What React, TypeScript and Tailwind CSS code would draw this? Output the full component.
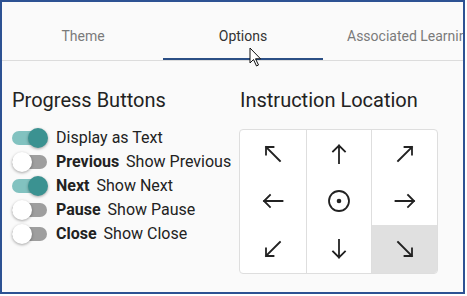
import React from 'react';

// arrow glyphs for the location picker, drawn on a 24 grid
const arrowPaths: Record<string, string> = {
  nw: 'M5 5 L19 19 M5 5 H12.5 M5 5 V12.5',
  n: 'M12 3.5 V21 M6 9.5 L12 3.5 L18 9.5',
  ne: 'M19 5 L5 19 M19 5 H11.5 M19 5 V12.5',
  w: 'M3 12 H21.5 M9 6 L3 12 L9 18',
  e: 'M21 12 H2.5 M15 6 L21 12 L15 18',
  sw: 'M5 19 L19 5 M5 19 H12.5 M5 19 V11.5',
  s: 'M12 20.5 V3 M6 14.5 L12 20.5 L18 14.5',
  se: 'M19 19 L5 5 M19 19 H11.5 M19 19 V11.5',
};

const Arrow: React.FC<{ dir: string }> = ({ dir }) => {
  if (dir === 'c') {
    return (
      <svg width="24" height="24" viewBox="0 0 24 24" fill="none">
        <circle cx="12" cy="12" r="10" stroke="#222" strokeWidth="1.8" />
        <circle cx="12" cy="12" r="2.3" fill="#222" />
      </svg>
    );
  }
  return (
    <svg width="24" height="24" viewBox="0 0 24 24" fill="none">
      <path d={arrowPaths[dir]} stroke="#222" strokeWidth="1.8" strokeLinecap="square" />
    </svg>
  );
};

const Toggle: React.FC<{ on: boolean }> = ({ on }) => (
  <span className="relative w-[36px] h-[20px] shrink-0">
    <span className={`absolute left-0 top-[3px] w-[35px] h-[14px] rounded-full ${on ? 'bg-[#82c2c0]' : 'bg-[#9e9e9e]'}`} />
    <span
      className={`absolute top-0 w-[20px] h-[20px] rounded-full shadow-[0_1px_3px_rgba(0,0,0,0.35)] ${
        on ? 'left-[16px] bg-[#3b9291]' : 'left-0 bg-white'
      }`}
    />
  </span>
);

const rows = [
  { on: true, bold: '', text: 'Display as Text' },
  { on: false, bold: 'Previous', text: 'Show Previous' },
  { on: true, bold: 'Next', text: 'Show Next' },
  { on: false, bold: 'Pause', text: 'Show Pause' },
  { on: false, bold: 'Close', text: 'Show Close' },
];

const cells = ['nw', 'n', 'ne', 'w', 'c', 'e', 'sw', 's', 'se'];

export default function App() {
  return (
    <div className="w-[467px] h-[296px] bg-white">
      <div className="relative w-[465px] h-[294px] border-2 border-[#2d5293] bg-[#fafafa] overflow-hidden font-['Roboto',sans-serif] text-[#222]">
        {/* Tabs */}
        <div className="flex h-[59px] border-b border-[#dcdcdc] pl-px text-[14px] leading-5">
          <div className="w-[160px] shrink-0 pt-[24px] text-center text-[#7a7a7a]">Theme</div>
          <div className="relative w-[160px] shrink-0 pt-[24px] text-center text-[#333]">
            Options
            <span className="absolute left-0 right-0 bottom-0 h-[2px] bg-[#2b4f85]" />
          </div>
          <div className="flex-1 min-w-0 pt-[24px] pl-[24px] whitespace-nowrap overflow-hidden text-[#7a7a7a]">
            Associated Learning Objectives
          </div>
        </div>

        <div className="flex pt-[27px]">
          {/* Progress buttons */}
          <div className="w-[237px] shrink-0 pl-[10px]">
            <h2 className="text-[20px] leading-6 font-normal">Progress Buttons</h2>
            <div className="mt-[14px] flex flex-col">
              {rows.map((r, i) => (
                <div key={i} className="h-[24px] flex items-center text-[16px] whitespace-nowrap">
                  <Toggle on={r.on} />
                  <span className="ml-[8px]">
                    {r.bold && <span className="font-bold mr-[7px]">{r.bold}</span>}
                    {r.text}
                  </span>
                </div>
              ))}
            </div>
          </div>

          {/* Instruction location */}
          <div className="flex-1">
            <h2 className="ml-px text-[20px] leading-6 font-normal">Instruction Location</h2>
            <div className="mt-[17px] w-[199px] h-[145px] grid grid-cols-3 grid-rows-3 border border-[#dedede] rounded bg-white overflow-hidden">
              {cells.map((c, i) => (
                <div
                  key={c}
                  className={`flex items-center justify-center ${i % 3 !== 0 ? 'border-l border-[#dedede]' : ''} ${
                    c === 'se' ? 'bg-[#e0e0e0]' : ''
                  }`}
                >
                  <Arrow dir={c} />
                </div>
              ))}
            </div>
          </div>
        </div>

        {/* mouse pointer */}
        <svg className="absolute left-[247px] top-[45px]" width="14" height="21" viewBox="0 0 14 21">
          <path d="M1 1 V16 L4.5 12.5 L7.5 19 L9.5 18 L6.5 11.8 H11.5 Z" fill="#fff" stroke="#111" strokeWidth="1" strokeLinejoin="round" />
        </svg>
      </div>
    </div>
  );
}
